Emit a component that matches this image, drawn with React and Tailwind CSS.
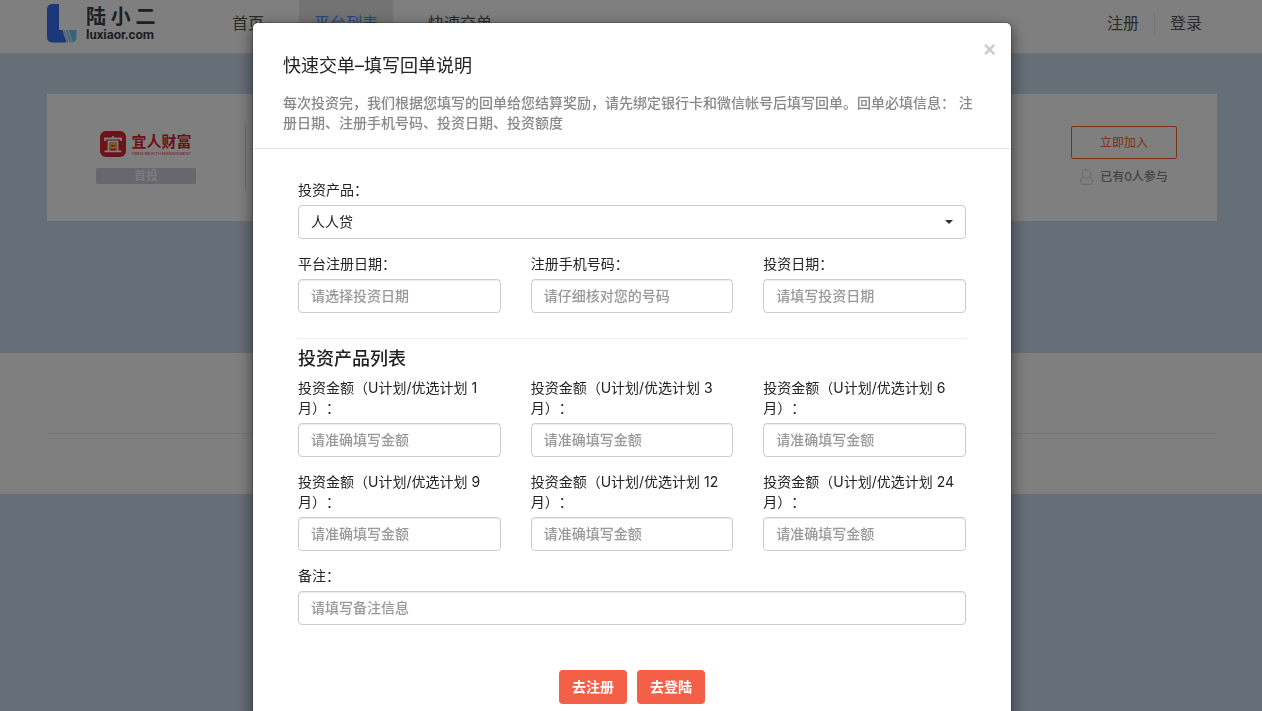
import React from "react";

const navItems = [
  { label: "首页", active: false },
  { label: "平台列表", active: true },
  { label: "快速交单", active: false },
];

const infoFields = [
  { id: "registerDate", label: "平台注册日期：", placeholder: "请选择投资日期" },
  { id: "phone", label: "注册手机号码：", placeholder: "请仔细核对您的号码" },
  { id: "investDate", label: "投资日期：", placeholder: "请填写投资日期" },
];

const months = [1, 3, 6, 9, 12, 24];

const description =
  "每次投资完，我们根据您填写的回单给您结算奖励，请先绑定银行卡和微信帐号后填写回单。回单必填信息： 注册日期、注册手机号码、投资日期、投资额度";

const Logo = () => (
  <a href="#" className="flex gap-2">
    <svg width="31" height="40" viewBox="0 0 31 40" className="mt-1">
      <path
        d="M5 0h7v26h3.500l4 12.500H5a5 5 0 0 1-5-5V5a5 5 0 0 1 5-5z"
        fill="#3470f0"
      />
      <path d="M16.200 26h1.500l4 12.500h-1.500z" fill="#8fc8f0" />
      <path d="M18.800 26h2l4 12.500h-2z" fill="#7cc6ee" />
      <path d="M21.800 26H29.500v7a5.500 5.500 0 0 1-4 5.300z" fill="#6cc6f0" />
    </svg>
    <span className="flex flex-col pt-[6px] font-bold text-[#3c3c4a]">
      <span className="text-xl leading-[22px]">陆 小 二</span>
      <span className="font-[Roboto] text-[13px] leading-[14px]">
        luxiaor.com
      </span>
    </span>
  </a>
);

const Header = () => (
  <header className="border-b border-[#e7e7e7] bg-white pr-[30px] pl-8">
    <div className="mx-auto flex h-[53px] max-w-[1170px] text-base leading-[22px] text-[#555]">
      <div className="w-[170px]">
        <Logo />
      </div>
      <nav className="flex flex-1 gap-5">
        {navItems.map((item) => (
          <a
            key={item.label}
            href="#"
            className={
              item.active
                ? "bg-[#e7e7e7] px-[15px] pt-3 text-[#4a90f8]"
                : "px-[15px] pt-3"
            }
          >
            {item.label}
          </a>
        ))}
      </nav>
      <div className="flex items-start pt-3">
        <a href="#" className="px-[15px]">
          注册
        </a>
        <a href="#" className="border-l border-[#e7e7e7] px-[15px]">
          登录
        </a>
      </div>
    </div>
  </header>
);

const PlatformCard = () => (
  <section className="mx-auto flex h-[127px] max-w-[1170px] items-center justify-between bg-white">
    <div className="flex h-[66px] w-[199px] flex-col items-center justify-center gap-[11px] border-r border-[#ddd]">
      <div className="flex items-center gap-[5px] text-[#dc1f2e]">
        <svg width="26" height="26" viewBox="0 0 26 26">
          <rect width="26" height="26" rx="6" fill="#d92632" />
          <g fill="none" stroke="#fff" strokeWidth="1.800">
            <path d="M5 10V7.500h16V10M13 5v2.500M8.500 20v-9.500h9V20M4.500 20.300h17" />
          </g>
          <path
            d="M9.500 12.500h7M9.500 17h7M9 14.800c2-2 6-2 8 0-2 2-6 2-8 0z"
            fill="none"
            stroke="#f5c542"
            strokeWidth="1.400"
          />
        </svg>
        <div>
          <p className="text-[15px] leading-5 font-bold">宜人财富</p>
          <p className="text-[4px] leading-[4px] whitespace-nowrap">
            YIREN WEALTH MANAGEMENT
          </p>
        </div>
      </div>
      <p className="w-[100px] rounded-xs bg-[#cfcfda] text-center text-xs leading-4 font-medium text-white">
        首投
      </p>
    </div>
    <div className="flex w-[186px] flex-col items-center gap-2 pb-[2px] text-xs">
      <button
        type="button"
        className="h-[33px] w-[106px] rounded-xs border border-[#ff6422] text-[#ff6422]"
      >
        立即加入
      </button>
      <p className="flex items-center gap-[7px] leading-5 font-medium text-[#888]">
        <svg
          width="13"
          height="16"
          viewBox="0 0 13 16"
          fill="none"
          stroke="#ccc"
        >
          <circle cx="6.500" cy="5" r="4.300" />
          <path d="M3.300 8C1.500 9 .7 10.500.7 12.500c0 1.800.8 2.800 2.300 2.800h7c1.500 0 2.300-1 2.300-2.800 0-2-.8-3.500-2.600-4.500" />
        </svg>
        已有0人参与
      </p>
    </div>
  </section>
);

const Field = ({ id, label, placeholder }) => (
  <div>
    <label htmlFor={id} className="mb-[5px] block">
      {label}
    </label>
    <input
      id={id}
      name={id}
      type="text"
      placeholder={placeholder}
      className="h-[34px] w-full rounded border border-[#ccc] bg-white px-3 pb-[2px] shadow-[inset_0_1px_1px_rgba(0,0,0,0.075)] outline-0 placeholder:font-medium placeholder:text-[#999] focus:border-[#66afe9]"
    />
  </div>
);

const ReceiptForm = () => (
  <form className="flex flex-col gap-[15px] px-[45px] pt-[31px] pb-[30px]">
    <div>
      <label htmlFor="product" className="mb-[5px] block">
        投资产品：
      </label>
      <div className="relative">
        <select
          id="product"
          name="product"
          className="block h-[34px] w-full appearance-none rounded border border-[#ccc] bg-white px-3 outline-0"
        >
          <option>人人贷</option>
        </select>
        <svg
          width="8"
          height="4"
          viewBox="0 0 8 4"
          className="pointer-events-none absolute top-[15px] right-[13px]"
        >
          <path d="M0 0h8L4 4z" fill="#333" />
        </svg>
      </div>
    </div>

    <div className="grid grid-cols-3 gap-[30px]">
      {infoFields.map((field) => (
        <Field key={field.id} {...field} />
      ))}
    </div>

    <fieldset className="mt-[10px] border-t border-[#eee] pt-[10px]">
      <h3 className="mb-[9px] text-lg leading-5 font-medium">投资产品列表</h3>
      <div className="grid grid-cols-3 gap-x-[30px] gap-y-[15px]">
        {months.map((month) => (
          <Field
            key={month}
            id={`amount${month}`}
            label={`投资金额（U计划/优选计划 ${month}月）：`}
            placeholder="请准确填写金额"
          />
        ))}
      </div>
    </fieldset>

    <Field id="remark" label="备注：" placeholder="请填写备注信息" />

    <div className="mt-[30px] flex justify-center gap-[10px] font-bold text-white">
      <button type="button" className="h-[34px] rounded bg-[#f45f47] px-[13px]">
        去注册
      </button>
      <button type="button" className="h-[34px] rounded bg-[#f45f47] px-[13px]">
        去登陆
      </button>
    </div>
  </form>
);

const ReceiptModal = () => (
  <div className="fixed inset-0 overflow-y-auto bg-black/50 pt-[22px] pr-[30px] pb-[30px] pl-8 [scrollbar-width:none]">
    <div
      role="dialog"
      aria-labelledby="modalTitle"
      className="relative mx-auto max-w-[760px] rounded-md border border-black/20 bg-white bg-clip-padding text-[#222] shadow-[0_5px_15px_rgba(0,0,0,0.5)]"
    >
      <button
        type="button"
        aria-label="关闭"
        className="absolute top-[15px] right-[14px] text-[22px] leading-5 font-semibold text-[#ccc]"
      >
        ×
      </button>
      <div className="border-b border-[#e5e5e5] px-[30px] pt-[30px] pb-[15px]">
        <h2 id="modalTitle" className="mb-[14px] text-lg leading-[26px]">
          快速交单–填写回单说明
        </h2>
        <p className="font-medium text-[#888]">{description}</p>
      </div>
      <ReceiptForm />
    </div>
  </div>
);

const App = () => {
  return (
    <div className="min-h-screen bg-[#ccdcf0] font-[Inter,'Noto_Sans_CJK_SC',sans-serif] text-sm leading-5 text-[#333] [text-spacing-trim:space-all]">
      <Header />
      <main>
        <div className="pt-10 pr-[30px] pb-33 pl-8">
          <PlatformCard />
        </div>
        <div className="bg-white pr-[30px] pl-8">
          <div className="mx-auto max-w-[1170px] pt-20 pb-15">
            <hr className="border-[#eee]" />
          </div>
        </div>
      </main>
      <ReceiptModal />
    </div>
  );
};

export default App;
